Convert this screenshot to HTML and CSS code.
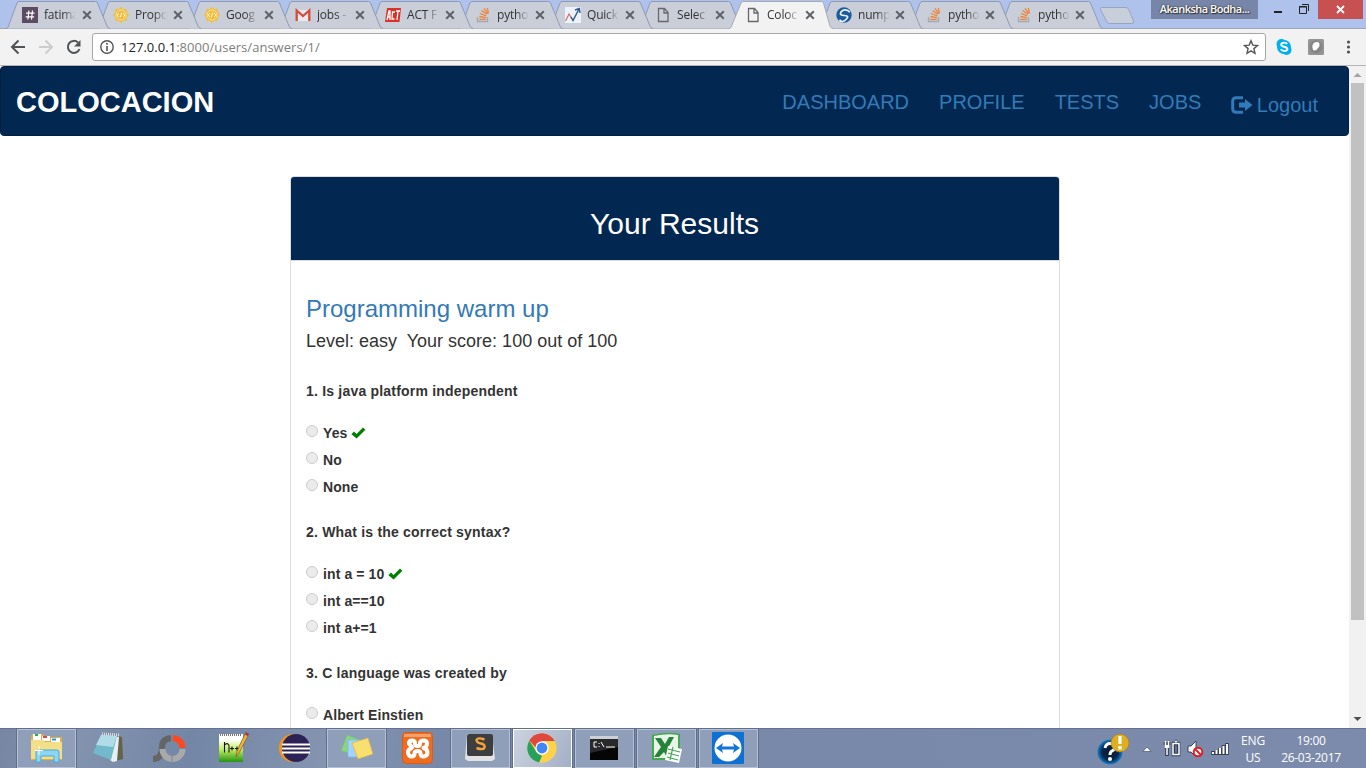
FILE: index.html
```html
<!DOCTYPE html>
<html lang="en">
<head>
<meta charset="utf-8">
<title>Colocacion</title>
<link rel="stylesheet" href="styles.css">
</head>
<body>
<svg class="defs" width="0" height="0">
  <symbol id="x" viewBox="0 0 10 10"><path d="M1.2 1.2 8.8 8.8M8.8 1.2 1.2 8.8" stroke="#5f6368" stroke-width="2" fill="none"/></symbol>
  <symbol id="shape" viewBox="0 0 104 29"><path d="M0 28.500C1.500 28.500 2 27.500 2.500 26L11 3Q12 1.500 13 1.500H89.500Q91 1.500 91.500 3L101 26Q102 28.500 104 28.500" fill="#c9ced8" stroke="#8f9ab5"/></symbol>
  <symbol id="shape-on" viewBox="0 0 104 30"><path d="M0 30V28.500C1.500 28.500 2 27.500 2.500 26L12 3Q13 1.500 14 1.500H92.500Q94 1.500 94.500 3L101 26Q102 28.500 104 28.500V30" fill="#f2f2f2"/><path d="M0 28.500C1.500 28.500 2 27.500 2.500 26L12 3Q13 1.500 14 1.500H92.500Q94 1.500 94.500 3L101 26Q102 28.500 104 28.500" fill="none" stroke="#a5aab5"/></symbol>
  <symbol id="sun" viewBox="0 0 16 16"><path d="M8 0l2 2.200 3.500-.4.100 3.200L16 8l-2.200 2.400-.1 3.200-3.400.1L8 16l-2.300-2.200-3.300-.1-.1-3.300L0 8l2.300-2.700.1-3.400 3.300.2z" fill="#f1bd3e"/><circle cx="8" cy="8" r="5" fill="#f0bb35" stroke="#fae29d"/><path d="M6 6 4.200 8 6 10M10 6l1.800 2L10 10M8.800 5.500 7.200 10.500" fill="none" stroke="#fff8df"/></symbol>
  <symbol id="so" viewBox="0 0 16 16"><path d="M2.500 10v4.500h10V10" fill="none" stroke="#aaa9a9" stroke-width="1.400"/><path d="M4.300 12.300h6.500M4.400 9.500l6.400 1.100M5 6.500l6.200 2.300M6.500 3.400l5.300 3.900M9 1.400l3.700 5.200M12.400 1l1 5.500" stroke="#ed8439" stroke-width="1.300"/></symbol>
  <symbol id="page" viewBox="0 0 16 16"><path d="M3.500 1.500h6l3.500 4v9H3.500zM9 1.500V6h4" fill="none" stroke="#65676b" stroke-width="1.300"/></symbol>
  <symbol id="check" viewBox="0 0 15 12"><path d="M.4 7.200 3 4.500l2.600 2.600L12 .5 14.400 2.700 5.600 11.500z" fill="#008000"/></symbol>
</svg>

<header class="tabbar">
  <div class="tabs">
    <div class="tab"><svg class="shape"><use href="#shape"/></svg><div class="in"><svg class="fav" viewBox="0 0 16 16"><path d="M0 0h16v16H0z" fill="#5b4b63"/><path d="M6.900 3.500 5.900 12.500M10.500 3.500l-1 9M4 6.200h8.500M3.600 9.800h8.500" stroke="#fff" stroke-width="1.200"/></svg><span>fatima</span><svg class="x"><use href="#x"/></svg></div></div>
    <div class="tab"><svg class="shape"><use href="#shape"/></svg><div class="in"><svg class="fav"><use href="#sun"/></svg><span>Propo</span><svg class="x"><use href="#x"/></svg></div></div>
    <div class="tab"><svg class="shape"><use href="#shape"/></svg><div class="in"><svg class="fav"><use href="#sun"/></svg><span>Goog</span><svg class="x"><use href="#x"/></svg></div></div>
    <div class="tab"><svg class="shape"><use href="#shape"/></svg><div class="in"><svg class="fav" viewBox="0 0 16 16"><path d="M1 3h14v11H1z" fill="#e9e9ec"/><path d="M1.700 14V3.500L8 9l6.300-5.500V14" fill="none" stroke="#d54b3d" stroke-width="2.300"/></svg><span>jobs -</span><svg class="x"><use href="#x"/></svg></div></div>
    <div class="tab"><svg class="shape"><use href="#shape"/></svg><div class="in"><svg class="fav" viewBox="0 0 16 16"><path d="M2 1h14l-1.500 14H0z" fill="#d8342c"/><path d="M2 13 4 4h1v9M2.500 10H5M10 5H7.500L7 12h2.500M11 4h4M13 4l-1 9" stroke="#fff" stroke-width="1.300" fill="none"/></svg><span>ACT F</span><svg class="x"><use href="#x"/></svg></div></div>
    <div class="tab"><svg class="shape"><use href="#shape"/></svg><div class="in"><svg class="fav"><use href="#so"/></svg><span>pytho</span><svg class="x"><use href="#x"/></svg></div></div>
    <div class="tab"><svg class="shape"><use href="#shape"/></svg><div class="in"><svg class="fav" viewBox="0 0 16 16"><path d="M0 0h16v16H0z" fill="#edf2fa"/><path d="M.5 14 4 7l3 5" fill="none" stroke="#dc7469" stroke-width="1.300"/><path d="M6 10l2 3.500L14 2M10 3l4.300-1.500L15 6" fill="none" stroke="#305d8c" stroke-width="1.500"/></svg><span>Quick</span><svg class="x"><use href="#x"/></svg></div></div>
    <div class="tab"><svg class="shape"><use href="#shape"/></svg><div class="in"><svg class="fav"><use href="#page"/></svg><span>Selec</span><svg class="x"><use href="#x"/></svg></div></div>
    <div class="tab active"><svg class="shape"><use href="#shape-on"/></svg><div class="in"><svg class="fav"><use href="#page"/></svg><span>Coloc</span><svg class="x"><use href="#x"/></svg></div></div>
    <div class="tab"><svg class="shape"><use href="#shape"/></svg><div class="in"><svg class="fav" viewBox="0 0 16 16"><circle cx="8" cy="8" r="7.700" fill="#1c5c9c"/><path d="M12.500 3.800Q7 1.500 5 5t3.500 3.500 1.500 4-6.500.2M12 4l2 1" fill="none" stroke="#e7f2fb" stroke-width="1.700"/></svg><span>nump</span><svg class="x"><use href="#x"/></svg></div></div>
    <div class="tab"><svg class="shape"><use href="#shape"/></svg><div class="in"><svg class="fav"><use href="#so"/></svg><span>pytho</span><svg class="x"><use href="#x"/></svg></div></div>
    <div class="tab"><svg class="shape"><use href="#shape"/></svg><div class="in"><svg class="fav"><use href="#so"/></svg><span>pytho</span><svg class="x"><use href="#x"/></svg></div></div>
  </div>
  <svg class="newtab" width="36" height="20" viewBox="0 0 36 20"><path d="M2.500 1.500H27Q29 1.500 30 4l4.500 11Q35 17.500 33 17.500H10Q8.500 17.500 7.500 15L1.500 3.500Q1 1.500 2.500 1.500z" fill="#c9cedb" stroke="#98a4c2"/></svg>
  <div class="user">Akanksha Bodha...</div>
  <svg class="win" width="60" height="19" viewBox="0 0 60 19"><path d="M16 12h8" stroke="#222" stroke-width="2"/><path d="M41.500 6.500h7v7h-7zM41 7h8M44 4.500h6.500V11" fill="none" stroke="#222"/></svg>
  <div class="close"><svg width="9" height="9" viewBox="0 0 9 9"><path d="M1 1l7 7M8 1 1 8" stroke="#fff" stroke-width="1.800"/></svg></div>
</header>

<div class="toolbar">
  <svg width="92" height="36" viewBox="0 0 92 36" fill="none" stroke="#505356" stroke-width="2"><path d="M25 18H12.500M18.500 11.500l-6.500 6.500 6.500 6.500"/><path d="M39 18h12.500M45.500 11.500l6.500 6.500-6.500 6.500" stroke="#ccc"/><path d="M79.500 20a6 6 0 1 1-1.500-6.500"/><path d="M80.500 11v6.500h-6.500z" fill="#505356" stroke="none"/></svg>
  <div class="url">
    <svg width="14" height="14" viewBox="0 0 14 14"><circle cx="7" cy="7" r="6.200" fill="none" stroke="#555" stroke-width="1.400"/><path d="M7 6v5M7 3v1.700" stroke="#555" stroke-width="1.600"/></svg>
    <span class="addr"><b>127.0.0.1</b>:8000/users/answers/1/</span>
    <svg width="16" height="16" viewBox="0 0 16 16"><path d="M8 1.700l1.800 4.400 4.700.4-3.600 3.100 1.100 4.700L8 11.800l-4 2.500 1.100-4.700-3.600-3.100 4.700-.4z" fill="none" stroke="#555" stroke-width="1.400"/></svg>
  </div>
  <svg width="100" height="36" viewBox="0 0 100 36"><circle cx="15.500" cy="15" r="5" fill="#00aff0"/><circle cx="20.500" cy="21" r="5" fill="#00aff0"/><circle cx="18" cy="18" r="7" fill="#00aff0"/><path d="M21.200 14.900c-1.500-1.900-6-1.600-6 .8 0 2.600 6.200 1.400 6.200 4.300 0 2.500-5 2.600-6.700.3" fill="none" stroke="#fff" stroke-width="1.900"/><rect x="42" y="10" width="16" height="16" rx="1.500" fill="#949494"/><circle cx="50" cy="18" r="6.500" fill="#858585"/><path d="M53 13.500q-4-1.500-6 1.500-1.500 3 .5 6.500 3 .5 4.500-2.500 2.500-2 1-5.500z" fill="#fff"/><g fill="#505050"><circle cx="82.500" cy="13" r="1.600"/><circle cx="82.500" cy="18" r="1.600"/><circle cx="82.500" cy="23" r="1.600"/></g></svg>
</div>

<div class="viewport">
  <main>
    <nav class="navbar">
      <a class="brand">COLOCACION</a>
      <div class="links">
        <a>DASHBOARD</a><a>PROFILE</a><a>TESTS</a><a>JOBS</a>
        <a class="logout"><svg width="22" height="18" viewBox="0 0 22 18"><path d="M12 1.700H5.200Q1.700 1.700 1.700 5.200v7.600q0 3.500 3.500 3.500H12" fill="none" stroke="#337ab7" stroke-width="3"/><path d="M8 6.500h6V3l7.500 6-7.500 6v-3.500H8z" fill="#337ab7"/></svg>Logout</a>
      </div>
    </nav>
    <section class="panel">
      <div class="heading">Your Results</div>
      <div class="content">
        <h2>Programming warm up</h2>
        <p class="score">Level: easy&nbsp; Your score: 100 out of 100</p>
        <div class="question">
          <h3>1. Is java platform independent</h3>
          <div class="opt"><i></i><span>Yes</span><svg><use href="#check"/></svg></div>
          <div class="opt"><i></i><span>No</span></div>
          <div class="opt"><i></i><span>None</span></div>
        </div>
        <div class="question">
          <h3>2. What is the correct syntax?</h3>
          <div class="opt"><i></i><span>int a = 10</span><svg><use href="#check"/></svg></div>
          <div class="opt"><i></i><span>int a==10</span></div>
          <div class="opt"><i></i><span>int a+=1</span></div>
        </div>
        <div class="question">
          <h3>3. C language was created by</h3>
          <div class="opt"><i></i><span>Albert Einstien</span></div>
        </div>
      </div>
    </section>
  </main>
  <div class="scroll">
    <svg width="17" height="17" viewBox="0 0 17 17"><path d="M4.500 11 8.500 7l4 4z" fill="#a3a3a3"/></svg>
    <div class="thumb"></div>
    <svg class="down" width="17" height="17" viewBox="0 0 17 17"><path d="M4.500 6h8l-4 4z" fill="#505050"/></svg>
  </div>
</div>

<footer class="taskbar">
  <div class="apps">
    <div class="app open"><svg width="36" height="34" viewBox="0 0 36 34"><path d="M4 3h11l2 3h17v23H3V6z" fill="#d7b34f"/><path d="M5 3h8v6H5zM14 5h8v5h-8zM23 7h9v5h-9z" fill="#fff"/><path d="M7 3h3v2H7z" fill="#20b34b"/><path d="M15 5h4v2h-4z" fill="#df483e"/><path d="M24 7.500h4v2h-4z" fill="#2799e3"/><path d="M3 9h12l2 2h17v17H3z" fill="#f3df88"/><path d="M8 31V21q0-2 2-2h19q2 0 2 2v10h-5v-6H13v6z" fill="#8cd5f4" stroke="#4ba9d5"/><path d="M11 15v9M7 19.500h8" stroke="#fff"/></svg></div>
    <div class="app"><svg width="36" height="34" viewBox="0 0 36 34"><path d="m27 5 5 1 1 22-8 2z" fill="#65624c"/><path d="m12 4 17 2-2 24-4 1-3-2z" fill="#e8eff0"/><path d="m11 4 16 1-6 24L3 22z" fill="#72b9cc"/><path d="m11 4 16 1-4 11-17-2z" fill="#b0dce7"/><path d="m12 3 17 1" stroke="#ddd" stroke-width="3" stroke-dasharray="1 1"/></svg></div>
    <div class="app"><svg width="36" height="34" viewBox="0 0 36 34" fill="none" stroke-width="6"><path d="M19 7q-9 1-9 9 0 12-9 12" stroke="#656565"/><path d="M20.500 7a10 10 0 0 1 10 10" stroke="#ff4820"/><path d="M30.500 18a10 10 0 0 1-20 0" stroke="#a9a9a9"/><path d="M20 3v28" stroke="#7788a3" stroke-width="1"/></svg></div>
    <div class="app"><svg width="36" height="34" viewBox="0 0 36 34"><defs><linearGradient id="npp" x2="0" y2="1"><stop offset=".2" stop-color="#fff"/><stop offset=".55" stop-color="#c2ee63"/><stop offset="1" stop-color="#259314"/></linearGradient></defs><path d="M5 3h24v28H5z" fill="url(#npp)"/><path d="M6 4h22" stroke="#777" stroke-width="2" stroke-dasharray="1 1"/><path d="M10.500 21.500V11M10.500 14q2-2 3.500-1 1 0 1 2v6.500M16 17.500h4M18 15.500v4M21 17.500h4M23 15.500v4" fill="none" stroke="#111" stroke-width="1.100"/><path d="m22 26 1-6L31 3l3 2-9 17z" fill="#e9b53b" stroke="#7c5420" stroke-width=".7"/><path d="m31 3 1-2 3 2-1 2z" fill="#ae3340"/></svg></div>
    <div class="app"><svg width="36" height="34" viewBox="0 0 36 34"><circle cx="17" cy="17" r="14" fill="#f7941e"/><circle cx="20" cy="17" r="14" fill="#2c2255"/><path d="M6 13.500h28M6 17.500h28M6 21.500h28" stroke="#fff" stroke-width="2"/></svg></div>
    <div class="app open"><svg width="36" height="34" viewBox="0 0 36 34"><path d="m9 4 13 5-6 14-13-3z" fill="#8bd486" stroke="#6cc368" stroke-width=".7"/><path d="M10 9h15v17H10z" fill="#a4d4fa" stroke="#73b9ec" stroke-width=".7"/><path d="m14 12 16-5 5 16-15 5z" fill="#f8df70" stroke="#d5b641" stroke-width=".7"/></svg></div>
    <div class="app"><svg width="36" height="34" viewBox="0 0 36 34"><rect x="2.500" y="1.500" width="30" height="31" rx="4" fill="#ee6c20" stroke="#d65e19"/><path d="M4 3h27v3H4z" fill="#f5a06c"/><g fill="none" stroke="#fff" stroke-width="4" stroke-linecap="round" stroke-linejoin="round"><path d="M9 12.500Q9 9.500 12 9.500T15 12.500Q15 15 17.500 15T20 12.500Q20 9.500 23.500 9.500T27 12.500Q27 16 23.500 17Q27.500 18 27.500 21.500T24 25.500T20.500 22.500Q20.500 20 17.500 20T14.500 22.500Q14.500 25.500 11.500 25.500T8 21.500Q8 18.500 11 17.500"/><path d="M9.500 13 12 16.500"/></g></svg></div>
    <div class="app open"><svg width="36" height="34" viewBox="0 0 36 34"><path d="m5 3-2 25 3 2h24l3-2-3-25z" fill="#e2e2e2"/><rect x="5" y="3" width="26" height="22" rx="2" fill="#3d3e40"/><path d="M22.500 8.500q-7-2.500-8 .5 0 2.500 4.500 3.500t3.500 4-8 .5" fill="none" stroke="#f7a33c" stroke-width="2.400"/></svg></div>
    <div class="app open current"><svg width="36" height="34" viewBox="0 0 36 34"><circle cx="18" cy="17" r="14.500" fill="#ffd24a"/><path d="M18 17 5.400 9.700A14.500 14.500 0 0 1 30.600 10z" fill="#df493d"/><path d="M5.400 9.700 13 22l5 3-3 6.500A14.500 14.500 0 0 1 5.400 9.700z" fill="#26a05a"/><path d="M18 10h12.600L24 20z" fill="#ffd24a"/><path d="M5.500 9.500A14.500 14.500 0 0 1 30.500 10H18l-6 7z" fill="#df493d"/><circle cx="18" cy="17" r="6.700" fill="#fff"/><circle cx="18" cy="17" r="5.400" fill="#4285f4"/></svg></div>
    <div class="app open"><svg width="36" height="34" viewBox="0 0 36 34"><path d="M4 5h28v24H4z" fill="#050505"/><path d="M4 5h28v3H4z" fill="#cbd0d9"/><path d="M4 8h28v8L4 22z" fill="#292929"/><path d="M11 11H8v5h3M13 12v1M13 15v1M15 11l3 5M20 16h9" stroke="#fff" fill="none"/></svg></div>
    <div class="app open"><svg width="36" height="34" viewBox="0 0 36 34"><path d="M4 4q16-4 28-1v26H4z" fill="#44a850"/><path d="M6 5q13-3 24-1v23H6z" fill="#e8f4e6"/><path d="M7 7h6l4 6 4-7h5l-6 11 7 11h-7l-4-7-5 5H6l7-10z" fill="#23843a"/><path d="m20 15 14 3-3 14-14-3z" fill="#fff"/><path d="m20 18 12 3m-12 1 11 3m-12 1 11 3m-5-13-3 13" stroke="#44a850" stroke-width="1.200"/></svg></div>
    <div class="app open"><svg width="36" height="34" viewBox="0 0 36 34"><rect x="2" y="1" width="32" height="32" rx="1" fill="#0e70d1"/><circle cx="18" cy="17" r="13.500" fill="#fff"/><path d="m6 17 7-5-1 3.500h12L23 12l7 5-7 5 1-3.500H12l1 3.500z" fill="#1475d5"/></svg></div>
  </div>
  <div class="tray">
    <svg class="status" width="140" height="39" viewBox="0 1 140 39"><defs><radialGradient id="q"><stop stop-color="#07182f"/><stop offset=".65" stop-color="#08284f"/><stop offset="1" stop-color="#1680c8"/></radialGradient></defs><circle cx="13" cy="24" r="12.500" fill="url(#q)"/><path d="M8 20q1-4.500 5-4.500 5 0 5 3.500 0 2.500-3 4-2 1-2 4" fill="none" stroke="#fff" stroke-width="3"/><circle cx="13" cy="31" r="2" fill="#fff"/><circle cx="23" cy="15" r="9" fill="#deb021" stroke="#a77c18" stroke-width=".6"/><path d="M23 8v8M23 18v3.500" stroke="#fff" stroke-width="3.200"/><path d="m46 23.500 4-4.500 4 4.500z" fill="#fff" stroke="#485575" stroke-width=".7"/><g stroke="#303a50" stroke-width="3.600" fill="none"><path d="M68.500 14v3M71.500 14v3M67 18.500h6M70 19v9M76.500 15.500h5v11h-5zM78 13.500h2"/></g><g stroke="#fff" stroke-width="1.500" fill="none"><path d="M68.500 13v4M71.500 13v4M70 19v8M76 15.500h6v11h-6zM78 13.500h2"/><path d="M67.500 18.500h5" stroke-width="3"/></g><path d="M91 18h3l5-5v16l-5-5h-3z" fill="#fff" stroke="#39455d"/><circle cx="101" cy="24" r="4.300" fill="#fff" stroke="#e21f28" stroke-width="2"/><path d="m98 21 6 6" stroke="#e21f28" stroke-width="2"/><path d="M116 27v-4M119.500 27v-5M123 27v-7M126.500 27V17M130 27V15" stroke="#354159" stroke-width="3.600"/><path d="M116 26v-2M119.500 26v-4M123 26v-6M126.500 26v-8M130 26V16" stroke="#fff" stroke-width="2"/></svg>
    <div class="lang">ENG<br>US</div>
    <div class="clock">19:00<br>26-03-2017</div>
  </div>
</footer>
</body>
</html>
```
FILE: styles.css
```css
* { box-sizing: border-box; }
body { margin: 0; width: 1366px; height: 768px; overflow: hidden; display: flex; flex-direction: column; background: #fff; font-family: "Liberation Sans", Arial, sans-serif; color: #333; }
svg { display: block; flex: none; }
.defs { position: absolute; }

.tabbar { height: 29px; display: flex; align-items: flex-start; background: #afc2eb; border-bottom: 1px solid #9ea5b5; font-family: "Open Sans", "Noto Sans", sans-serif; flex: none; }
.tabs { display: flex; width: 1094px; padding-left: 6px; flex: none; isolation: isolate; }
.tab { width: 90px; height: 29px; flex: none; display: grid; grid-template-columns: 104px; position: relative; z-index: 1; }
.tab:nth-child(-n+3) { width: 91px; }
.tab > * { grid-area: 1 / 1; }
.shape { width: 104px; height: 29px; }
.tab:nth-child(1) { z-index: 12; }
.tab:nth-child(2) { z-index: 11; }
.tab:nth-child(3) { z-index: 10; }
.tab:nth-child(4) { z-index: 9; }
.tab:nth-child(5) { z-index: 8; }
.tab:nth-child(6) { z-index: 7; }
.tab:nth-child(7) { z-index: 6; }
.tab:nth-child(8) { z-index: 5; }
.tab:nth-child(10) { z-index: 3; }
.tab:nth-child(11) { z-index: 2; }
.tab.active { z-index: 20; }
.active .shape { height: 30px; }
.in { height: 29px; display: flex; align-items: center; padding: 1px 0 0 16px; }
.tab:nth-child(n+10) .in { padding-left: 17px; }
.tab:nth-child(n+10) .in span { margin-right: 3px; }
.fav { width: 16px; height: 16px; margin-right: 6px; }
.in span { width: 34px; margin-right: 4px; white-space: nowrap; font-size: 12px; line-height: 18px; letter-spacing: -.2px; color: #333; -webkit-mask-image: linear-gradient(90deg, #000 55%, transparent 94%); mask-image: linear-gradient(90deg, #000 55%, transparent 94%); }
.x { width: 10px; height: 10px; }
.newtab { margin: 6px 0 0 5px; }
.user { margin-left: 16px; width: 107px; height: 19px; background: #7786a8; color: #fff; font-size: 11px; font-weight: 600; line-height: 18px; text-align: center; letter-spacing: -.5px; text-shadow: 0 0 2px #222, 1px 1px 1px #333; white-space: nowrap; flex: none; }
.close { width: 45px; height: 19px; background: #c75050; display: flex; align-items: center; justify-content: center; }

.toolbar { height: 37px; display: flex; background: #f2f2f2; border-bottom: 1px solid #b6b4b6; flex: none; }
.url { width: 1174px; height: 28px; margin-top: 4px; padding: 0 6px 0 7px; display: flex; align-items: center; background: #fff; border: 1px solid #a6a6a6; border-radius: 3px; font: 13px "Open Sans", "Noto Sans", sans-serif; }
.addr { flex: 1; margin-left: 7px; color: #7d7d7d; letter-spacing: .03px; }
.addr b { font-weight: 400; color: #222; }

.viewport { height: 662px; display: flex; overflow: hidden; flex: none; }
main { width: 1349px; }
.navbar { height: 70px; display: flex; justify-content: space-between; background: #022851; border: 1px solid #01203f; border-radius: 4px; padding: 0 30px 0 15px; }
.brand { font-size: 29px; line-height: 70px; font-weight: 700; color: #fff; }
.links { display: flex; gap: 30px; font-size: 20px; line-height: 70px; color: #337ab7; }
.logout { display: flex; align-items: center; gap: 4px; padding-top: 7px; margin-left: -.5px; }
.panel { width: 770px; height: 700px; margin: 40px 0 0 290px; border: 1px solid #ddd; border-radius: 4px; }
.heading { height: 84px; padding-top: 30px; padding-right: 1px; background: #022851; border-bottom: 1px solid #ddd; border-radius: 3px 3px 0 0; color: #fff; font-size: 30px; line-height: 33px; text-align: center; }
.content { padding: 35px 15px; }
h2, h3, p { margin: 0; }
h2 { font-size: 24px; line-height: 26px; font-weight: 400; color: #337ab7; }
.score { margin-top: 9px; font-size: 18px; line-height: 20px; }
.question { margin-top: 30px; font-size: 14px; font-weight: 700; }
.question + .question { margin-top: 23px; }
h3 { font-size: 14px; line-height: 20px; margin-bottom: 19px; letter-spacing: .2px; }
.opt { display: flex; align-items: center; height: 27px; }
.opt:last-child { margin-bottom: -2px; }
.opt span { line-height: 20px; margin-bottom: 3px; padding-top: 2px; letter-spacing: .1px; }
.opt i { width: 12px; height: 12px; border: 1px solid #ccc; border-radius: 50%; margin: 0 5px 6px 0; background: #ebebeb; }
.opt svg { width: 15px; height: 12px; margin: 0 0 1px 4px; }
.scroll { width: 17px; background: #f1f1f1; display: flex; flex-direction: column; }
.thumb { width: 13px; height: 537px; margin-left: 2px; background: #c1c1c1; }
.down { margin-top: auto; }

.taskbar { height: 40px; display: flex; justify-content: space-between; background: linear-gradient(100deg, #7787a3, #8293ae 6%, #7386a5 14%, #8494b0 24%, #7888a8 32%, #7989aa 60%, #7c8bab); border-top: 1px solid #65718e; flex: none; }
.apps { display: flex; gap: 3px; padding-left: 16.500px; }
.app { width: 59px; height: 39px; display: flex; align-items: center; justify-content: center; padding: 0 1px 2px 0; }
.open { border: 1px solid #b7c1d3; background: #8f9eb9; outline: 1px solid #5f6e89; outline-offset: 0; }
.current { background: linear-gradient(115deg, #ccd3df, #a3afc6); border-color: #fff; }
.tray { display: flex; color: #fff; font: 12px/17px "Open Sans", "Noto Sans", sans-serif; text-align: center; white-space: nowrap; }
.lang { width: 32px; padding-top: 3px; letter-spacing: -.2px; }
.clock { width: 84px; margin-right: 13px; padding-top: 3px; letter-spacing: -.3px; }
```
